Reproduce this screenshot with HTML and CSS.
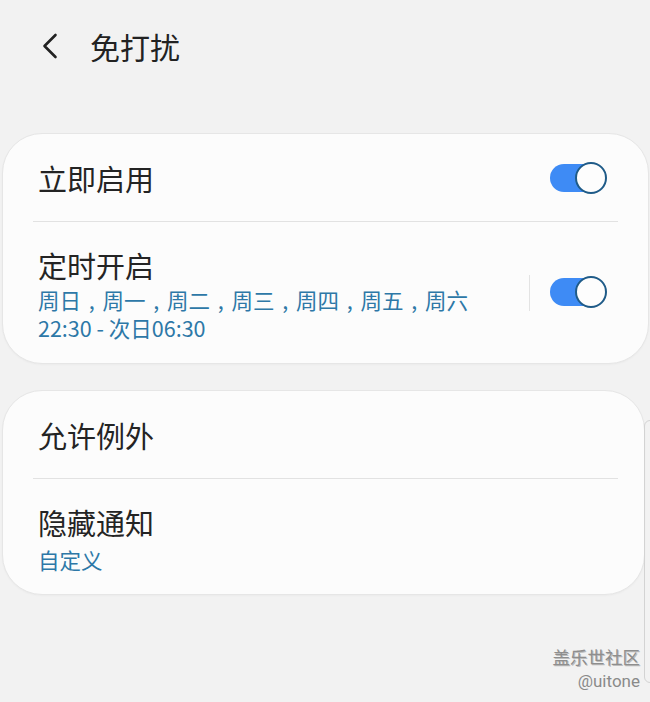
FILE: index.html
```html
<!DOCTYPE html>
<html lang="zh-CN">
<head>
<meta charset="utf-8">
<title>免打扰</title>
<link rel="stylesheet" href="styles.css">
</head>
<body>
<div class="screen">
  <header class="appbar">
    <svg class="back" width="16" height="26" viewBox="0 0 16 26" aria-hidden="true">
      <path d="M13.5 2 L2.5 13 L13.5 24" fill="none" stroke="#222" stroke-width="2.6" stroke-linecap="round" stroke-linejoin="round"/>
    </svg>
    <h1 class="title">免打扰</h1>
  </header>

  <main class="content">
    <section class="card">
      <div class="row row-simple">
        <div class="label grow">立即启用</div>
        <div class="toggle on"><span class="track"></span><span class="knob"></span></div>
      </div>
      <div class="divider"></div>
      <div class="row row-sub">
        <div class="text">
          <div class="label">定时开启</div>
          <div class="sub">周日<span class="sep">,</span>周一<span class="sep">,</span>周二<span class="sep">,</span>周三<span class="sep">,</span>周四<span class="sep">,</span>周五<span class="sep">,</span>周六<br>22:30 - 次日06:30</div>
        </div>
        <div class="vline"></div>
        <div class="toggle on"><span class="track"></span><span class="knob"></span></div>
      </div>
    </section>

    <section class="card card2">
      <div class="row row-simple">
        <div class="label grow">允许例外</div>
      </div>
      <div class="divider"></div>
      <div class="row row-sub row-sub2">
        <div class="text">
          <div class="label">隐藏通知</div>
          <div class="sub">自定义</div>
        </div>
      </div>
    </section>
  </main>

  <div class="scroll-edge"></div>
  <div class="watermark">
    <div class="wm-cn">盖乐世社区</div>
    <div class="wm-en">@uitone</div>
  </div>
</div>
</body>
</html>
```

FILE: styles.css
```css
html, body {
  margin: 0;
  padding: 0;
}
body {
  background: #f2f2f2;
  font-family: "Noto Sans CJK SC", "Noto Sans", sans-serif;
  color: #232323;
}
.screen {
  position: relative;
  width: 650px;
  height: 702px;
  overflow: hidden;
}
.appbar {
  height: 92px;
  display: flex;
  align-items: center;
  padding-left: 42px;
  box-sizing: border-box;
}
.back {
  display: block;
  margin-right: 32px;
}
.title {
  margin: 0;
  font-size: 30px;
  font-weight: 400;
  line-height: 36px;
  color: #222;
}
.content {
  display: flex;
  flex-direction: column;
  gap: 26px;
  padding: 41px 1px 0 2px;
}
.card {
  background: #fcfcfc;
  border: 1px solid #e6e6e6;
  border-radius: 40px;
  box-shadow: 0 1px 2px rgba(0,0,0,0.03);
}
.card2 {
  margin-right: 4px;
}
.row {
  display: flex;
  align-items: center;
  padding: 0 41px 0 35px;
}
.row-simple {
  height: 87px;
}
.grow {
  flex: 1;
}
.label {
  font-size: 29px;
  line-height: 36px;
  color: #242424;
}
.divider {
  height: 1px;
  background: #e2e2e2;
  margin: 0 30px;
}
.card2 .divider {
  margin-right: 26px;
}
.row-sub {
  padding-top: 25px;
  padding-bottom: 21px;
}
.row-sub2 {
  padding-top: 25px;
  padding-bottom: 20px;
}
.text {
  flex: 1;
  display: flex;
  flex-direction: column;
  gap: 3px;
}
.row-sub2 .text {
  gap: 6px;
}
.sub {
  font-size: 21.5px;
  line-height: 28px;
  color: #2d78a7;
}
.sep {
  display: inline-block;
  width: 21.5px;
  text-align: center;
}
.vline {
  width: 1px;
  height: 36px;
  background: #e3e3e3;
  margin: 28px 20px 0 0;
  align-self: flex-start;
}
.toggle {
  position: relative;
  width: 57px;
  height: 32px;
  flex: none;
}
.row-sub .toggle {
  align-self: flex-start;
  margin-top: 29px;
}
.track {
  position: absolute;
  left: 0;
  top: 2px;
  width: 48px;
  height: 28px;
  border-radius: 14px;
  background: #3e8bf5;
}
.knob {
  position: absolute;
  right: 0;
  top: 0;
  width: 32px;
  height: 32px;
  box-sizing: border-box;
  border-radius: 50%;
  background: #fdfdfd;
  border: 2px solid #1f5b88;
}
.scroll-edge {
  position: absolute;
  left: 644px;
  top: 420px;
  width: 20px;
  height: 263px;
  box-sizing: border-box;
  border: 1px solid #d3d3d3;
  border-radius: 6px;
}
.watermark {
  position: absolute;
  right: 10px;
  top: 644px;
  text-align: right;
}
.wm-cn {
  font-size: 17.5px;
  line-height: 26px;
  font-weight: 400;
  color: #8e8e8e;
  text-shadow: 1px 1px 0 #bdbdbd;
}
.wm-en {
  font-family: Roboto, "Noto Sans", sans-serif;
  font-size: 17px;
  line-height: 22px;
  color: #8a8a8a;
}
```
